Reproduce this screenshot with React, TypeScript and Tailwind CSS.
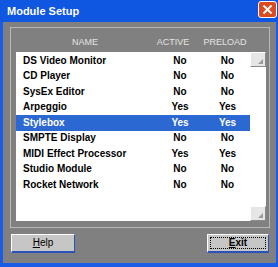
import React from 'react'

type Module = {
  name: string
  active: boolean
  preload: boolean
}

const modules: Module[] = [
  { name: 'DS Video Monitor', active: false, preload: false },
  { name: 'CD Player', active: false, preload: false },
  { name: 'SysEx Editor', active: false, preload: false },
  { name: 'Arpeggio', active: true, preload: true },
  { name: 'Stylebox', active: true, preload: true },
  { name: 'SMPTE Display', active: false, preload: false },
  { name: 'MIDI Effect Processor', active: true, preload: true },
  { name: 'Studio Module', active: false, preload: false },
  { name: 'Rocket Network', active: false, preload: false },
]

const selected = 4

const ScrollButton = () => (
  <div className='relative w-[16px] h-[15px] bg-[#e6e6e6] border-t border-l border-white border-r border-b border-r-[#8a8a8a] border-b-[#8a8a8a]'>
    <svg className='absolute right-[2px] bottom-[2px]' width='5' height='5' viewBox='0 0 5 5'>
      <polygon points='5,0 5,5 0,5' fill='#9a9a9a' />
    </svg>
  </div>
)

const App = () => {
  return (
    <div className="w-[278px] h-[267px] bg-[#1a5ce6] flex flex-col font-['Liberation_Sans',Arial,sans-serif]">
      {/* title bar */}
      <div className='h-[22px] flex items-center justify-between pl-[7px] pr-[1px] bg-[#0f56e0]'>
        <span className='text-white font-bold text-[11px] leading-none'>Module Setup</span>
        <div className='w-[19px] h-[17px] mb-[3px] rounded-[3px] border border-white bg-[#dd4a1e] flex items-center justify-center'>
          <svg width='11' height='11' viewBox='0 0 11 11'>
            <line x1='1.5' y1='1.5' x2='9.5' y2='9.5' stroke='white' strokeWidth='2' />
            <line x1='9.5' y1='1.5' x2='1.5' y2='9.5' stroke='white' strokeWidth='2' />
          </svg>
        </div>
      </div>

      {/* body */}
      <div className='flex-1 ml-[3px] mr-[2px] mb-[4px] bg-[#808080] pt-[5px] flex flex-col'>
        <div className='ml-[7px] mr-[6px] h-[201px] border border-[#b8b8b8] pl-[5px] pr-[3px] pb-[6px] flex flex-col'>
          {/* header */}
          <div className='h-[24px] flex items-end pb-[5px] text-[9px] leading-[10px] text-[#e4e4e4]'>
            <div className='w-[138px] text-center'>NAME</div>
            <div className='w-[38px] text-center'>ACTIVE</div>
            <div className='w-[66px] text-center'>PRELOAD</div>
          </div>

          {/* list */}
          <div className='flex-1 bg-white flex'>
            <div className='flex-1 pt-[1px]'>
              {modules.map((m, i) => (
                <div
                  key={m.name}
                  className={
                    'h-[15.5px] flex items-center text-[10px] font-bold leading-none ' +
                    (i === selected ? 'bg-[#2c68d2] text-white' : 'text-black')
                  }
                >
                  <div className='flex-1 pl-[7px]'>{m.name}</div>
                  <div className='w-[50px] text-center'>{m.active ? 'Yes' : 'No'}</div>
                  <div className='w-[45px] text-center'>{m.preload ? 'Yes' : 'No'}</div>
                </div>
              ))}
            </div>
            <div className='w-[16px] flex flex-col justify-between'>
              <ScrollButton />
              <ScrollButton />
            </div>
          </div>
        </div>

        {/* buttons */}
        <div className='mt-[6px] flex justify-between pl-[8px] pr-[7px]'>
          <button className='w-[64px] h-[19px] bg-[#c6c6c6] border-t border-l border-white border-r border-b-2 border-r-[#2a52b8] border-b-[#2a52b8] text-[10px] text-black leading-none flex items-center justify-center'>
            <span>
              <span className='underline'>H</span>elp
            </span>
          </button>
          <button className='w-[62px] h-[19px] bg-[#c6c6c6] border-t border-l border-white border-r border-b-2 border-r-[#2a52b8] border-b-[#2a52b8] p-[2px]'>
            <div className='w-full h-full border border-dotted border-black flex items-center justify-center text-[10px] font-bold text-black leading-none'>
              <span>
                <span className='underline'>E</span>xit
              </span>
            </div>
          </button>
        </div>
      </div>
    </div>
  )
}

export default App
